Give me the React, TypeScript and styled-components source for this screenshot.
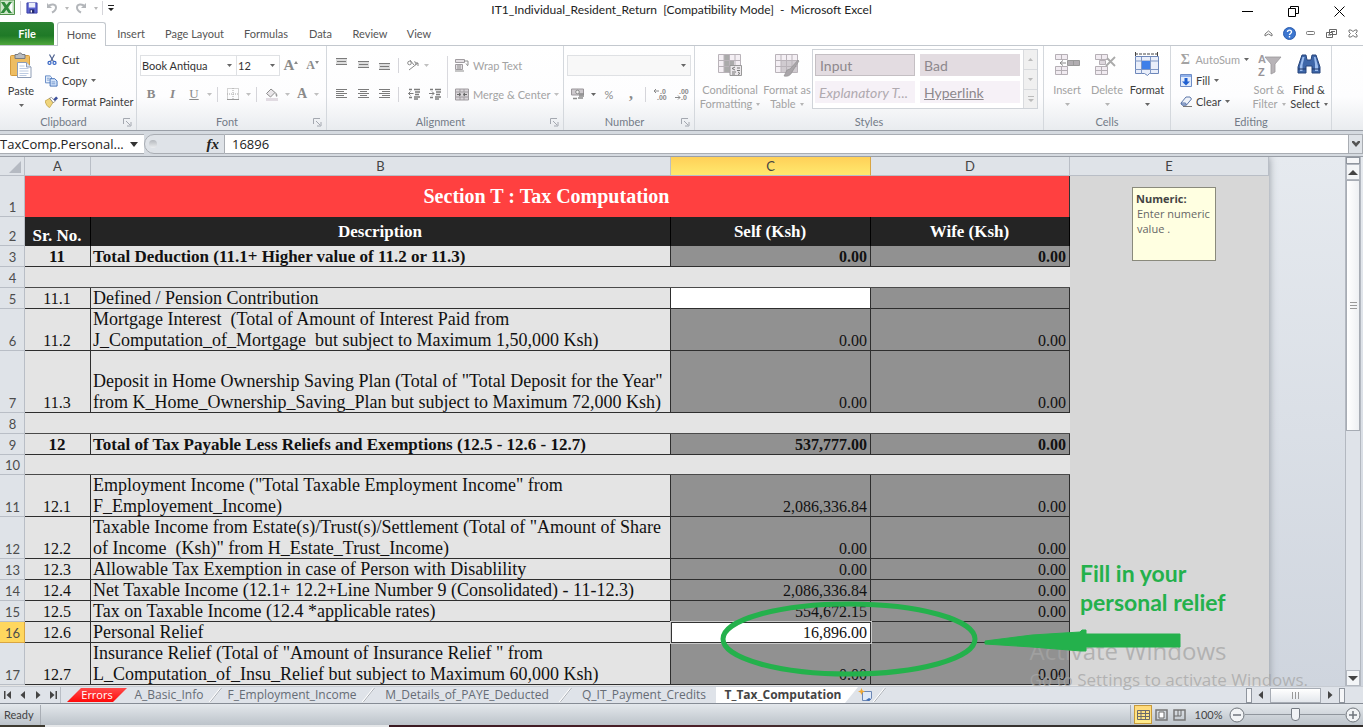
import React from "react";
import styled, { createGlobalStyle, css } from "styled-components";

const UI = `Lato, "Open Sans", sans-serif`;
const HUMANIST = `"Open Sans", "Noto Sans", sans-serif`;
const SHEET = `"Liberation Serif", serif`;
const CALIBRI = `Lato, "Noto Sans", sans-serif`;

const GlobalStyle = createGlobalStyle`
  *, *::before, *::after { box-sizing: border-box; }
  body { margin: 0; font-family: ${UI}; font-size: 11px; color: #444; overflow: hidden; }
  button, input, select { font: inherit; color: inherit; margin: 0; padding: 0; border: 0; background: none; border-radius: 0; }
  button { display: flex; align-items: center; justify-content: center; white-space: nowrap; flex: none; }
  svg { display: block; flex: none; }
`;

/* ---------- window ---------- */

const Window = styled.div`
  position: relative;
  display: flex;
  flex-direction: column;
  height: 100vh;
  background: #fff;
`;

const TitleBar = styled.header`
  position: relative;
  display: flex;
  align-items: center;
  justify-content: space-between;
  height: 22px;
`;

const QuickAccess = styled.div`
  display: flex;
  align-items: center;
  height: 16px;
  align-self: flex-start;
`;

const QuickButton = styled.button<{ $w: number }>`
  width: ${(p) => p.$w}px;
  height: 16px;
`;

const Title = styled.h1`
  margin: 0;
  position: absolute;
  left: 0;
  right: 0;
  top: 0;
  text-align: center;
  font-size: 12px;
  line-height: 20px;
  font-weight: 400;
  color: #222;
  white-space: pre;
  pointer-events: none;
`;

const WindowButtons = styled.div`
  display: flex;
  padding-right: 1px;
`;

const WindowButton = styled.button`
  width: 46px;
  height: 22px;
`;

const TabBar = styled.nav`
  display: flex;
  align-items: flex-end;
  height: 24px;
  border-bottom: 1px solid #c3c8ce;
`;

const RibbonTab = styled.button<{ $w: number; $kind?: "file" | "active" }>`
  width: ${(p) => p.$w}px;
  height: 23px;
  color: #555;
  ${(p) =>
    p.$kind === "file" &&
    css`
      && { color: #fff; background: linear-gradient(#2b8232, #1f7a27 60%, #4fa63c); border-radius: 0 3px 0 0; margin-right: 3px; }
      font-weight: 700;
    `}
  ${(p) =>
    p.$kind === "active" &&
    css`
      height: 24px;
      && { margin-bottom: -1px; border: 1px solid #c3c8ce; border-bottom: 0; border-radius: 3px 3px 0 0; background: #fff; }
    `}
`;

const TabBarRight = styled.div`
  display: flex;
  margin-left: auto;
  height: 23px;
  align-items: center;
`;

const DocButton = styled.button`
  width: 21px;
  height: 20px;
`;

/* ---------- ribbon ---------- */

const Ribbon = styled.div`
  display: flex;
  height: 84px;
  flex: none;
  background: linear-gradient(#fff, #fdfdfe 60%, #e9ecef);
`;

const GroupBox = styled.section<{ $w: number }>`
  display: flex;
  flex-direction: column;
  width: ${(p) => p.$w}px;
  flex: none;
  border-right: 1px solid #d4d8dd;
`;

const GroupBody = styled.div`
  display: flex;
  height: 68px;
  padding: 3px 3px 0;
`;

const GroupFooter = styled.div`
  display: flex;
  align-items: center;
  height: 16px;
  padding: 0 4px;
`;

const GroupLabel = styled.h2`
  flex: 1;
  margin: 0;
  text-align: center;
  font-size: 11px;
  line-height: 16px;
  font-weight: 400;
  color: #737b87;
`;

const BigButton = styled.button<{ $w: number; $dim?: boolean }>`
  flex-direction: column;
  justify-content: flex-start;
  width: ${(p) => p.$w}px;
  height: 65px;
  && { padding-top: 3px; }
  color: ${(p) => (p.$dim ? "#a3a3a3" : "#3c3c3c")};
  svg:first-child { margin-bottom: 5px; }
`;

const BigLine = styled.span`
  display: flex;
  align-items: center;
  gap: 4px;
  height: 14px;
  line-height: 14px;
`;

const Stack = styled.div`
  display: flex;
  flex: none;
  flex-direction: column;
`;

const ClipboardStack = styled(Stack)`
  padding-left: 6px;
`;

const EditStack = styled(Stack)`
  width: 75px;
  padding-left: 5px;
`;

const SmallButton = styled.button<{ $dim?: boolean }>`
  justify-content: flex-start;
  gap: 4px;
  height: 21px;
  color: ${(p) => (p.$dim ? "#a3a3a3" : "#3c3c3c")};
`;

const SmallIcon = styled.span`
  display: flex;
  justify-content: center;
  width: 13px;
`;

const ToolRow = styled.div`
  display: flex;
  align-items: center;
  height: 22px;
  margin: 5px 0 7px;
  & + & { margin: 0; }
`;

const Tool = styled.button<{ $w: number }>`
  width: ${(p) => p.$w}px;
  height: 22px;
  color: #8a8a8a;
`;

const Glyph = styled.span<{ $bold?: boolean; $italic?: boolean; $line?: boolean; $size?: number }>`
  font-family: ${SHEET};
  font-size: ${(p) => p.$size ?? 13}px;
  font-weight: ${(p) => (p.$bold ? 700 : 400)};
  font-style: ${(p) => (p.$italic ? "italic" : "normal")};
  text-decoration: ${(p) => (p.$line ? "underline" : "none")};
`;

const Rule = styled.span<{ $h: number }>`
  width: 1px;
  height: ${(p) => p.$h}px;
  margin: 0 4px;
  background: #d5d5da;
`;

const TallRule = styled.div`
  flex: none;
  width: 1px;
  height: 42px;
  margin: 7px 7px 0 2px;
  background: #d9d9de;
`;

const Picker = styled.label<{ $w: number; $dim?: boolean }>`
  display: flex;
  align-items: center;
  width: ${(p) => p.$w}px;
  height: 21px;
  padding: 0 4px 0 1px;
  border: 1px solid #dfe1e4;
  margin-right: -1px;
  background: ${(p) => (p.$dim ? "#f8f8f8" : "#fff")};
  color: #333;
  select { flex: 1; min-width: 0; appearance: none; outline: 0; }
`;

const Gallery = styled.div`
  display: flex;
  height: 60px;
  border: 1px solid #cfd3d8;
  background: #fff;
`;

const GalleryGrid = styled.div`
  display: grid;
  grid-template-columns: 100px 100px;
  grid-auto-rows: 22px;
  gap: 5px;
  padding: 4px 3px 0 2px;
`;

const StyleCell = styled.button<{ $tone: "dark" | "light"; $boxed?: boolean; $italic?: boolean; $line?: boolean }>`
  justify-content: flex-start;
  font-family: ${CALIBRI};
  font-size: 14px;
  color: ${(p) => (p.$italic ? "#b0aab0" : "#8d888d")};
  font-style: ${(p) => (p.$italic ? "italic" : "normal")};
  text-decoration: ${(p) => (p.$line ? "underline" : "none")};
  && {
    padding-left: 4px;
    background: ${(p) => (p.$tone === "dark" ? "#e3dce1" : "#f6f1f7")};
    border: ${(p) => (p.$boxed ? "1px solid #c4bfc3" : "0")};
  }
`;

const GalleryScroll = styled.div`
  display: grid;
  grid-template-rows: repeat(3, 1fr);
  width: 14px;
  background: #f0f0f0;
  border-left: 1px solid #d9dbde;
  button + button { border-top: 1px solid #d9dbde; }
`;

/* ---------- formula bar ---------- */

const FormulaBar = styled.div`
  display: flex;
  flex: none;
  height: 27px;
  padding: 3px 0 2px;
  border-top: 1px solid #9a9fa7;
  border-bottom: 1px solid #9a9fa7;
  background: #d5dae0;
  font-family: ${HUMANIST};
  font-size: 13px;
  line-height: 18px;
  color: #222;
`;

const NameBox = styled.div`
  display: flex;
  align-items: center;
  width: 144px;
  background: #fff;
  border: solid #a9adb3;
  border-width: 1px 0;
  input { width: 130px; height: 18px; outline: 0; }
`;

const FxArea = styled.div`
  display: flex;
  align-items: center;
  justify-content: space-between;
  width: 81px;
  padding: 0 5px 0 2px;
  border: 1px solid #a9adb3;
  border-radius: 10px 0 0 10px;
  background: #dfe3e8;
`;

const FxDot = styled.span`
  width: 8px;
  height: 8px;
  border-radius: 50%;
  margin-left: 2px;
  background: linear-gradient(#b4b8bd, #eceef0);
`;

const FormulaInput = styled.input`
  flex: 1;
  min-width: 0;
  outline: 0;
  && { padding-left: 7px; background: #fff; border: solid #a9adb3; border-width: 1px 0; }
`;

const ExpandButton = styled.button`
  width: 15px;
  && { background: #dfe3e8; border: 1px solid #a9adb3; }
`;

/* ---------- worksheet ---------- */

const Workspace = styled.main`
  position: relative;
  display: flex;
  flex: 1;
  min-height: 0;
  overflow: hidden;
  background: linear-gradient(#e6eaef, #cfd5de);
`;

const SheetArea = styled.div`
  flex: none;
  background: #e4e4e4;
  box-shadow: 0 0 8px #8e949c;
`;

const Grid = styled.table`
  width: 1269px;
  table-layout: fixed;
  border-collapse: separate;
  border-spacing: 0;
  td, th { padding: 0; overflow: hidden; }
`;

const ColumnHead = styled.th<{ $on?: boolean }>`
  height: 19px;
  font-family: ${CALIBRI};
  font-size: 13px;
  font-weight: 400;
  line-height: 18px;
  color: #444;
  background: ${(p) => (p.$on ? "linear-gradient(#ffd058, #ffe96e)" : "#dfe3e8")};
  border-right: 1px solid ${(p) => (p.$on ? "#d9a542" : "#b9bec6")};
  border-bottom: 1px solid #b9bec6;
`;

const RowHead = styled.th<{ $on?: boolean }>`
  vertical-align: bottom;
  font-family: ${CALIBRI};
  font-size: 13px;
  line-height: 16px;
  font-weight: 400;
  color: #4d4d4d;
  background: ${(p) => (p.$on ? "#ffd75e" : "#dfe3e8")};
  box-shadow: inset -1px -1px 0 ${(p) => (p.$on ? "#d9a542" : "#b9bec6")};
  && { padding-bottom: 2px; }
`;

const Row = styled.tr<{ $h: number }>`
  height: ${(p) => p.$h}px;
`;

type CellKind = "banner" | "head" | "label" | "locked" | "open" | "gap" | "side" | "active";

const tones: Record<CellKind, string> = {
  banner: "#ff4040",
  head: "#242424",
  label: "#e4e4e4",
  locked: "#919191",
  open: "#fff",
  active: "#fff",
  gap: "#e4e4e4",
  side: "#d7d7d7",
};

const cellSize = (kind: CellKind, align?: string, bold?: boolean) => {
  if (kind === "banner") return 20;
  if (kind === "head" || bold) return align === "right" ? 16 : 17;
  return align ? 16 : 18;
};

const Cell = styled.td<{ $kind: CellKind; $align?: "center" | "right"; $bold?: boolean; $mid?: boolean }>`
  font-family: ${SHEET};
  font-size: ${(p) => cellSize(p.$kind, p.$align, p.$bold)}px;
  line-height: 21px;
  font-weight: ${(p) => (p.$bold ? 700 : 400)};
  text-align: ${(p) => p.$align ?? "left"};
  vertical-align: ${(p) => (p.$mid ? "middle" : "bottom")};
  white-space: pre;
  color: ${(p) => (p.$kind === "banner" || p.$kind === "head" ? "#fff" : "#111")};
  background: ${(p) => tones[p.$kind]};
  && { padding: 0 4px 0 2px; }
  ${(p) => p.$kind === "banner" && css`box-shadow: inset -1px 0 0 #333;`}
  ${(p) => p.$kind === "head" && css`box-shadow: inset -1px 0 0 #000;`}
  ${(p) => ["label", "locked", "open"].includes(p.$kind) && css`box-shadow: inset -1px -1px 0 #2e2e2e;`}
  ${(p) => p.$kind === "gap" && css`box-shadow: inset 0 -1px 0 #4a4a4a;`}
  ${(p) => p.$kind === "active" && css`box-shadow: inset 0 0 0 1px #333, 0 0 0 1px #c9c9c9; position: relative;`}
`;

const Note = styled.aside`
  position: absolute;
  left: 1132px;
  top: 30px;
  width: 84px;
  height: 74px;
  padding: 3px;
  border: 1px solid #8a8a7c;
  background: #ffffe1;
  font-family: ${HUMANIST};
  font-size: 11px;
  line-height: 15px;
  color: #666;
  p { margin: 0; padding-left: 1px; }
  strong { color: #444; }
`;

const Marks = styled.svg`
  position: absolute;
  left: 716px;
  top: 440px;
  z-index: 2;
`;

const Callout = styled.p`
  position: absolute;
  left: 1080px;
  top: 402px;
  margin: 0;
  font-family: ${CALIBRI};
  font-size: 23px;
  line-height: 29px;
  font-weight: 700;
  color: #24b14c;
`;

const Watermark = styled.div`
  position: absolute;
  right: 55px;
  bottom: 34px;
  z-index: 1;
  pointer-events: none;
  font-family: ${HUMANIST};
  color: rgba(165, 165, 165, 0.75);
  p { margin: 0; font-size: 17px; line-height: 26px; white-space: nowrap; }
  p:first-child { font-size: 24px; line-height: 32px; }
`;

const VScroll = styled.div`
  display: flex;
  flex-direction: column;
  width: 16px;
  margin: 0 2px 0 auto;
  border: solid #b3b8c0;
  border-width: 0 1px;
  background: #dfe3e9;
`;

const Splitter = styled.div`
  height: 7px;
  border: 1px solid #8f959e;
  background: #f5f6f8;
`;

const ScrollButton = styled.button`
  height: 16px;
  width: 14px;
  && { border: 1px solid #b3b8c0; background: #f3f5f7; }
`;

const VThumb = styled.div`
  display: flex;
  align-items: center;
  justify-content: center;
  height: 251px;
  border: 1px solid #a7acb4;
  background: linear-gradient(90deg, #fff, #eef0f3);
`;

const Spacer = styled.div`
  flex: 1;
`;

/* ---------- sheet tabs and status bar ---------- */

const SheetBar = styled.div`
  display: flex;
  flex: none;
  height: 17px;
  border-top: 1px solid #c7ccd3;
  background: #dfe3e9;
  overflow: hidden;
`;

const SheetNav = styled.div`
  display: flex;
  width: 61px;
  border-right: 1px solid #b9bec6;
`;

const NavButton = styled.button`
  width: 15px;
  height: 16px;
`;

const SheetTab = styled.button<{ $w: number; $kind?: "error" | "active" }>`
  width: ${(p) => p.$w}px;
  height: 16px;
  font-family: ${HUMANIST};
  font-size: 12px;
  line-height: 16px;
  color: #666c75;
  ${(p) =>
    p.$kind === "error" &&
    css`
      height: 14px;
      font-size: 11px;
      && { margin: 1px 2px 0 6px; color: #fff; background: linear-gradient(#ff4a4a, #ff0a0a); }
      clip-path: polygon(14px 0, 100% 0, calc(100% - 14px) 100%, 0 100%);
    `}
  ${(p) =>
    p.$kind === "active" &&
    css`
      font-weight: 700;
      && { color: #444; background: #fff; padding-right: 8px; }
      clip-path: polygon(0 0, 100% 0, calc(100% - 13px) 100%, 0 100%);
    `}
`;

const HScroll = styled.div`
  display: flex;
  align-items: center;
  justify-content: space-between;
  width: 99px;
  margin: 0 18px 0 auto;
`;

const HGrip = styled.div`
  width: 6px;
  height: 15px;
  border: 1px solid #8f959e;
  background: #f5f6f8;
`;

const HThumb = styled.div`
  display: flex;
  align-items: center;
  justify-content: center;
  width: 51px;
  height: 15px;
  border: 1px solid #a7acb4;
  background: linear-gradient(#fff, #e3e7ec);
`;

const StatusBar = styled.footer`
  display: flex;
  align-items: center;
  flex: none;
  height: 22px;
  border-top: 1px solid #868c95;
  background: linear-gradient(#e4e8ec, #bcc3ca);
`;

const Ready = styled.span`
  width: 41px;
  padding-left: 4px;
  line-height: 20px;
  border-right: 1px solid #a9aeb5;
`;

const StatusRight = styled.div`
  display: flex;
  align-items: center;
  margin-left: auto;
  padding: 0 2px 0 3px;
  border-left: 1px solid #a9aeb5;
`;

const ViewButton = styled.button<{ $on?: boolean }>`
  width: 18px;
  height: 19px;
  ${(p) => p.$on && css`&& { border: 1px solid #c79a3a; background: linear-gradient(#ffd97a, #ffec8b); }`}
`;

const ZoomLabel = styled.output`
  width: 41px;
  text-align: center;
`;

const ZoomRange = styled.input`
  width: 100px;
  height: 16px;
  appearance: none;
  && { background: linear-gradient(#8f959c, #8f959c) center / 100% 1px no-repeat; }
  &::-webkit-slider-thumb {
    appearance: none;
    width: 9px;
    height: 13px;
    border: 1px solid #757b83;
    border-radius: 1px 1px 4px 4px;
    background: #f1f3f5;
  }
`;

const DesktopEdge = styled.div`
  flex: none;
  height: 2px;
  background: linear-gradient(90deg, #3d3a30 45px, #e4e6e8 45px, #e4e6e8 389px, #3a1a22 389px, #4d2029 700px, #3a3632 860px, #302c2a);
`;

/* ---------- small drawings ---------- */

const Caret = ({ color = "#666", w = 5 }: { color?: string; w?: number }) => (
  <svg width={w} height={w > 6 ? 5 : 3} viewBox="0 0 6 3" preserveAspectRatio="none"><path d="M0 0h6L3 3z" fill={color} /></svg>
);

const Launcher = () => (
  <svg width="9" height="9" viewBox="0 0 9 9" fill="none" stroke="#a4a8b0">
    <path d="M.5 6V.5H7M3 3l4 4M4 8h4V4" />
  </svg>
);

const ExcelLogo = () => (
  <svg width="16" height="16" viewBox="0 0 16 16">
    <path d="M0 0h14.500v14.500H0z" fill="#cfe6ca" stroke="#4c9147" />
    <path d="M9 2h4v11H9z" fill="#fff" stroke="#86b880" strokeWidth=".6" />
    <path d="M1 2h3.500L6.500 5 9 2h3L8 7.500l4 5.500H8.500L6.300 9.800 4 13H.5l4-5.500z" fill="#2f8a3a" />
  </svg>
);

const SaveIcon = () => (
  <svg width="12" height="12" viewBox="0 0 13 13">
    <path d="M1 1h11v11H1z" fill="#5b62cf" stroke="#3a3fa5" />
    <path d="M3 1h7v5H3z" fill="#eceffb" />
    <path d="M4 8h5v4H4z" fill="#23286f" />
    <path d="M5 9h1.500v2.500H5z" fill="#fff" />
  </svg>
);

const UndoIcon = ({ flip }: { flip?: boolean }) => (
  <svg width="12" height="12" viewBox="0 0 12 12" fill="none" stroke="#b3b6ba" strokeWidth="2">
    <g transform={flip ? "matrix(-1 0 0 1 12 0)" : undefined}>
      <path d="M2 4.500C5 1.500 10 2 10 5.500 10 8 8 9.500 6 10.500" />
      <path d="M1 1v5h5z" fill="#b3b6ba" stroke="none" />
    </g>
  </svg>
);

const PasteIcon = () => (
  <svg width="26" height="27" viewBox="0 0 26 27">
    <rect x="2.500" y="3.500" width="19" height="20" rx="1" fill="#eebd62" stroke="#d49a3c" />
    <path d="M7 2.500h3C10 .5 14 .5 14 2.500h3v4H7z" fill="#b9bcc0" stroke="#777b80" />
    <path d="M9.500 10.500h9l4.500 4.500v10.500H9.500z" fill="#fff" stroke="#8d9cb5" />
    <path d="M18.500 10.500V15H23" fill="#dfe7f3" stroke="#8d9cb5" />
    <path d="M11.500 14h5M11.500 16.500h9M11.500 19h9M11.500 21.500h9M11.500 23.500h7" stroke="#bccbe2" />
  </svg>
);

const CutIcon = () => (
  <svg width="10" height="12" viewBox="0 0 12 13" fill="none">
    <path d="M3 0l4.500 8M9 0L4.500 8" stroke="#4b5f8e" strokeWidth="1.400" />
    <circle cx="3" cy="10" r="1.800" stroke="#3464c4" strokeWidth="1.500" />
    <circle cx="9" cy="10" r="1.800" stroke="#3464c4" strokeWidth="1.500" />
  </svg>
);

const CopyIcon = () => (
  <svg width="13" height="12" viewBox="0 0 14 12">
    <path d="M.5.5h5L7 2v6H.5z" fill="#eaf2fd" stroke="#5c84c2" />
    <path d="M5.500 3.500h5L13 6v5.500H5.500z" fill="#d4e4fa" stroke="#3e6db5" />
    <path d="M2 3h3M2 5h3M7 7h4M7 9h4" stroke="#5c84c2" strokeWidth=".8" />
  </svg>
);

const BrushIcon = () => (
  <svg width="13" height="12" viewBox="0 0 14 12">
    <path d="M0 5l5-3 4 4-4 6C2 11 1 8 0 5z" fill="#f0d57c" stroke="#b79432" strokeWidth=".7" />
    <path d="M5 2l2-1 4 4-2 2z" fill="#fff" stroke="#666" strokeWidth=".7" />
    <path d="M9 3l3-3 2 2-3 3z" fill="#3b4f9c" />
  </svg>
);

const Lines = ({ ws, align = "c", dy = 0 }: { ws: number[]; align?: "l" | "c" | "r"; dy?: number }) => (
  <svg width="13" height="14" viewBox="0 0 13 14">
    {ws.map((w, i) => (
      <rect key={i} x={align === "l" ? 1 : align === "r" ? 12 - w : (13 - w) / 2} y={2 + dy + i * (ws.length > 3 ? 2 : 3)} width={w} height="1" fill="#7b7b7b" />
    ))}
    {ws.length === 3 && <rect x="1" y={3 + dy} width="11" height="5" fill="#7b7b7b" opacity=".25" />}
  </svg>
);

const IndentIcon = ({ out }: { out?: boolean }) => (
  <svg width="14" height="12" viewBox="0 0 14 12" stroke="#7d7d7d">
    <path d="M2 1.500h3M7 1.500h6M8 4h5M8 6.500h4M7 9h6M2 9.500h3M7 11h4" strokeWidth="1.300" />
    {out ? <path d="M6.500 5.500h-5M3.500 3.500l-2 2 2 2" fill="none" /> : <path d="M1 5.500h5M4 3.500l2 2-2 2" fill="none" />}
  </svg>
);

const OrientIcon = () => (
  <svg width="14" height="12" viewBox="0 0 14 12" fill="none" stroke="#8a8a8a">
    <circle cx="3.500" cy="4" r="1.800" /><path d="M4 1l4 5M8 3c2-1 3 2 1 3M3 11l9-7M12 4h-3M12 4v3" />
  </svg>
);

const WrapIcon = () => (
  <svg width="14" height="14" viewBox="0 0 14 14">
    <path d="M.5 1.500h9v3h-9zM.5 6.500h7v5h-7z" fill="#e4e0e4" stroke="#a09ca0" />
    <path d="M2 8h4M2 10h4M9 3h4v4M11 5.500L13 8M0 13h9" fill="none" stroke="#8d8d8d" />
  </svg>
);

const MergeIcon = () => (
  <svg width="14" height="13" viewBox="0 0 14 13">
    <path d="M.5 1h13v11H.5z" fill="#d9d5d9" stroke="#a09ca0" />
    <path d="M1 4h12M1 9h12M5 1v3M9 1v3M5 9v3M9 9v3" stroke="#a09ca0" />
    <path d="M2 6.500h3M12 6.500H9M4 5l2 1.500L4 8M10 5L8 6.500 10 8" stroke="#666" fill="none" />
  </svg>
);

const BordersIcon = () => (
  <svg width="12" height="12" viewBox="0 0 12 12" stroke="#a8a8a8" fill="none">
    <path d="M.5.5h11v11H.5zM6 0v12M0 6h12" strokeDasharray="1 1" /><path d="M0 11.500h12" stroke="#999" />
  </svg>
);

const BucketIcon = () => (
  <svg width="14" height="13" viewBox="0 0 14 13">
    <path d="M6 1L1.500 5.500l4 3.500L10 4.500z" fill="#e9e6e9" stroke="#8d8d8d" />
    <path d="M10 4c2 1 3 3 2 5-2-1-1-3-2-5z" fill="#999" /><path d="M1 10h12v3H1z" fill="#e1dbe2" />
  </svg>
);

const MoneyIcon = () => (
  <svg width="14" height="13" viewBox="0 0 14 13">
    <path d="M.5 1h12v6H.5z" fill="#cdc9cd" stroke="#9a969a" /><circle cx="6.500" cy="4" r="1.800" fill="#f2f2f2" stroke="#8a8a8a" />
    <path d="M8 6h5M8 8h5M7 10h5M2 10.500h4" stroke="#8a8a8a" strokeWidth="1.500" />
  </svg>
);

const Decimals = ({ top, bottom, left }: { top: string; bottom: string; left?: boolean }) => (
  <svg width="15" height="13" viewBox="0 0 15 13" fontFamily="Liberation Sans, sans-serif" fontSize="7" fontWeight="700" fill="#8a8a8a">
    <text x={left ? 7 : 5} y="6">{top}</text><text x={left ? 4 : 7} y="12">{bottom}</text>
    <path d={left ? "M1 3h5M3 1L1 3l2 2" : "M1 9.500h5M4 7.500l2 2-2 2"} stroke="#8a8a8a" fill="none" />
  </svg>
);

const TableIcon = ({ brush }: { brush?: boolean }) => (
  <svg width="26" height="26" viewBox="0 0 26 26">
    <path d="M1.500 2.500h22v18h-22z" fill="#f4eff4" stroke="#b9b3b9" />
    {brush ? <path d="M7 8h16v12H7z" fill="#d0cbd0" /> : <path d="M7 3h5v17H7zM12 8h5v5h-5z" fill="#aaa" />}
    <path d="M1 8.500h23M1 14.500h23M7 2v19M12.500 2v19M18 2v19" stroke="#b9b3b9" fill="none" />
    {brush ? (
      <path d="M24 8l-8 9-3 1-3 6c4 1 7-1 8-4l7-11z" fill="#a9a5a9" stroke="#8d8d8d" strokeWidth=".6" />
    ) : (
      <><path d="M13 13.500h11.500v10H13z" fill="#ebe8eb" stroke="#999" /><path d="M18 15l-3 1.500 3 1.500M15 20h4M20 16h3M20 18.500h3M15 22h3M21 20l2 1.500-2 1" stroke="#777" fill="none" /></>
    )}
  </svg>
);

const CellsIcon = ({ kind }: { kind: "insert" | "delete" }) => (
  <svg width="26" height="26" viewBox="0 0 26 26">
    <path d="M1.500 2.500h12v5h-12zM7.500 2.500v5M1.500 14.500h12v8h-12zM1.500 18.500h12M7.500 14.500v8" fill="#f1ebf1" stroke="#b5afb5" />
    {kind === "insert" ? (
      <><path d="M13.500 8.500h12v5h-12z" fill="#b1adb1" stroke="#999" /><path d="M19.500 8.500v5" stroke="#999" /><path d="M12 11H6M9 8.500L6 11l3 2.500" stroke="#888" fill="none" /></>
    ) : (
      <><path d="M5.500 8.500h6v4h-6z" fill="#ddd7dd" stroke="#b5afb5" /><path d="M13 6l8 8M21 5l-9 9" stroke="#aaa" strokeWidth="1.800" /></>
    )}
  </svg>
);

const FormatIcon = () => (
  <svg width="26" height="26" viewBox="0 0 26 26">
    <path d="M1 2h23" stroke="#444" strokeDasharray="3 1" /><path d="M1.500 0v4M23.500 0v4" stroke="#444" />
    <path d="M1.500 4.500h23v17h-9l-2 2-3-2h-9z" fill="#e9eefa" stroke="#6d87ba" />
    <path d="M1 9h23M1 17.500h23M7.500 5v17M16.500 5v17" stroke="#7f97c5" />
    <path d="M8 9h8v8H8z" fill="#3f7fe8" />
  </svg>
);

const FillIcon = () => (
  <svg width="12" height="13" viewBox="0 0 12 13">
    <path d="M.5.5h11v12H.5z" fill="#e3ecfb" stroke="#6d8cc6" /><path d="M1 1h10v2H1z" fill="#8fb0ea" />
    <path d="M4.500 4h3v3.500H10L6 11.500 2 7.500h2.500z" fill="#1f5fd0" />
  </svg>
);

const EraserIcon = () => (
  <svg width="12" height="11" viewBox="0 0 12 11">
    <path d="M1 7l5-6h4l1.500 2-5 6H2z" fill="#eef2f9" stroke="#5d76a8" /><path d="M1 7h4.500l1 2H2z" fill="#b8c9ea" stroke="#5d76a8" /><path d="M3 10.500h9" stroke="#777" />
  </svg>
);

const SortIcon = () => (
  <svg width="26" height="26" viewBox="0 0 26 26">
    <path d="M9 5h16l-6 7v8l-4 2V12z" fill="#b8b4b8" stroke="#9b979b" strokeWidth=".8" />
    <text x="2" y="11" fontFamily="Liberation Sans, sans-serif" fontWeight="700" fontSize="11" fill="#a09ca0">A</text>
    <text x="2" y="24" fontFamily="Liberation Sans, sans-serif" fontWeight="700" fontSize="11" fill="#969296">Z</text>
  </svg>
);

const BinocularsIcon = () => (
  <svg width="26" height="26" viewBox="0 0 26 26">
    <path d="M6 3h4l1 5h4l1-5h4l4 12v6h-8v-7h-6v7H2v-6z" fill="#3e66a8" stroke="#27457c" strokeLinejoin="round" />
    <path d="M6.500 5h2L6.500 13v6H4v-5zM18 5h1.500L22 14v5h-3v-7z" fill="#9dbdee" />
    <path d="M2 17h8M16 17h8" stroke="#1f3766" />
  </svg>
);

const NewSheetIcon = () => (
  <svg width="15" height="14" viewBox="0 0 15 14">
    <path d="M4.500 3.500h9v7l-2 2h-7z" fill="#dfe9f8" stroke="#6c87b4" /><path d="M8 12l3-2 2 1-2 2z" fill="#3e6db5" />
    <path d="M3.500 0l1 2.500L7 3.500 4.500 4.500l-1 2.500-1-2.500L0 3.500l2.500-1z" fill="#f0a935" />
  </svg>
);

const Slash = () => (
  <svg width="13" height="16" viewBox="0 0 13 16" fill="none"><path d="M.5 15.500L12 1" stroke="#fff" strokeWidth="2" /><path d="M1 15.500L12.500 1" stroke="#a7acb4" /></svg>
);

const ViewIcon = ({ kind }: { kind: number }) => (
  <svg width="13" height="12" viewBox="0 0 13 12" fill="none" stroke="#6b6b6b">
    {kind === 0 && <path d="M.5 1.500h12v9H.5zM0 4.500h13M0 7.500h13M4 1v10M8.500 1v10" />}
    {kind === 1 && <><path d="M1 1h11v10H1z" stroke="#777" strokeWidth="1.500" /><path d="M4 3h5v6H4z" fill="#fff" /></>}
    {kind === 2 && <><path d="M1 1h11v10H1z" stroke="#777" strokeWidth="1.500" /><path d="M5 1v6M8 1v6M1 7h7" /></>}
  </svg>
);

const ZoomDisc = ({ plus }: { plus?: boolean }) => (
  <svg width="16" height="16" viewBox="0 0 16 16" fill="none" stroke="#6f757c">
    <circle cx="8" cy="8" r="7" fill="#f1f3f5" /><path d={plus ? "M4 8h8M8 4v8" : "M4 8h8"} strokeWidth="1.500" />
  </svg>
);

const Arrow = ({ d }: { d: string }) => (
  <svg width="10" height="10" viewBox="0 0 10 10"><path d={d} fill="#444" /></svg>
);

const SelectAll = () => (
  <svg width="24" height="18" viewBox="0 0 24 18"><path d="M21 4v12H9z" fill="#b5bac2" /></svg>
);

/* ---------- ribbon pieces ---------- */

const Group = ({ label, w, launcher, children }: { label: string; w: number; launcher?: boolean; children: React.ReactNode }) => (
  <GroupBox $w={w} aria-label={label}>
    <GroupBody>{children}</GroupBody>
    <GroupFooter>
      <GroupLabel>{label}</GroupLabel>
      {launcher && <Launcher />}
    </GroupFooter>
  </GroupBox>
);

const Big = ({ w, icon, lines, dim }: { w: number; icon: React.ReactNode; lines: [string, string?]; dim?: boolean }) => (
  <BigButton $w={w} $dim={dim}>
    {icon}
    <BigLine>{lines[0]}</BigLine>
    <BigLine>
      {lines[1] && <span>{lines[1]}</span>}
      <BigCaret><Caret color={dim ? "#b5b5b5" : "#666"} w={lines[1] ? 4 : 5} /></BigCaret>
    </BigLine>
  </BigButton>
);

const BigCaret = styled.span`
  display: flex;
  && svg { margin: 0; }
`;

const Small = ({ icon, dim, children }: { icon: React.ReactNode; dim?: boolean; children: React.ReactNode }) => (
  <SmallButton $dim={dim}><SmallIcon>{icon}</SmallIcon>{children}</SmallButton>
);

const ribbonTabs: { name: string; w: number; kind?: "file" | "active" }[] = [
  { name: "File", w: 54, kind: "file" },
  { name: "Home", w: 49, kind: "active" },
  { name: "Insert", w: 50 },
  { name: "Page Layout", w: 77 },
  { name: "Formulas", w: 66 },
  { name: "Data", w: 43 },
  { name: "Review", w: 56 },
  { name: "View", w: 42 },
];

/* ---------- worksheet data ---------- */

interface SheetRow {
  n: number;
  h: number;
  sr?: string;
  text?: string;
  self?: string;
  wife?: string;
  bold?: boolean;
  selfKind?: CellKind;
}

const rows: SheetRow[] = [
  { n: 3, h: 21, sr: "11", text: "Total Deduction (11.1+ Higher value of 11.2 or 11.3)", self: "0.00", wife: "0.00", bold: true },
  { n: 4, h: 21 },
  { n: 5, h: 20, sr: "11.1", text: "Defined / Pension Contribution", self: "", wife: "", selfKind: "open" },
  { n: 6, h: 42, sr: "11.2", text: "Mortgage Interest  (Total of Amount of Interest Paid from\nJ_Computation_of_Mortgage  but subject to Maximum 1,50,000 Ksh)", self: "0.00", wife: "0.00" },
  { n: 7, h: 62, sr: "11.3", text: "Deposit in Home Ownership Saving Plan (Total of \"Total Deposit for the Year\"\nfrom K_Home_Ownership_Saving_Plan but subject to Maximum 72,000 Ksh)", self: "0.00", wife: "0.00" },
  { n: 8, h: 21 },
  { n: 9, h: 21, sr: "12", text: "Total of Tax Payable Less Reliefs and Exemptions (12.5 - 12.6 - 12.7)", self: "537,777.00", wife: "0.00", bold: true },
  { n: 10, h: 20 },
  { n: 11, h: 42, sr: "12.1", text: "Employment Income (\"Total Taxable Employment Income\" from\nF_Employement_Income)", self: "2,086,336.84", wife: "0.00" },
  { n: 12, h: 42, sr: "12.2", text: "Taxable Income from Estate(s)/Trust(s)/Settlement (Total of \"Amount of Share\nof Income  (Ksh)\" from H_Estate_Trust_Income)", self: "0.00", wife: "0.00" },
  { n: 13, h: 20, sr: "12.3", text: "Allowable Tax Exemption in case of Person with Disablility", self: "0.00", wife: "0.00" },
  { n: 14, h: 21, sr: "12.4", text: "Net Taxable Income (12.1+ 12.2+Line Number 9 (Consolidated) - 11-12.3)", self: "2,086,336.84", wife: "0.00" },
  { n: 15, h: 21, sr: "12.5", text: "Tax on Taxable Income (12.4 *applicable rates)", self: "554,672.15", wife: "0.00" },
  { n: 16, h: 21, sr: "12.6", text: "Personal Relief", self: "16,896.00", wife: "", selfKind: "active" },
  { n: 17, h: 42, sr: "12.7", text: "Insurance Relief (Total of \"Amount of Insurance Relief \" from\nL_Computation_of_Insu_Relief but subject to Maximum 60,000 Ksh)", self: "0.00", wife: "0.00" },
];

const sheetTabs = [
  { name: "A_Basic_Info", w: 80 },
  { name: "F_Employment_Income", w: 140 },
  { name: "M_Details_of_PAYE_Deducted", w: 184 },
  { name: "Q_IT_Payment_Credits", w: 144 },
];

export default function App() {
  return (
    <Window>
      <GlobalStyle />
      <TitleBar>
        <QuickAccess>
          <ExcelLogo />
          <Rule $h={14} />
          <QuickButton $w={14} aria-label="Save"><SaveIcon /></QuickButton>
          <QuickButton $w={25} aria-label="Undo"><UndoIcon /></QuickButton>
          <QuickButton $w={5} aria-label="Undo list"><Caret color="#b8b8b8" w={4} /></QuickButton>
          <QuickButton $w={24} aria-label="Redo"><UndoIcon flip /></QuickButton>
          <QuickButton $w={5} aria-label="Redo list"><Caret color="#b8b8b8" w={4} /></QuickButton>
          <Rule $h={14} />
          <QuickButton $w={8} aria-label="Customize toolbar">
            <svg width="6" height="6" viewBox="0 0 6 6"><path d="M0 0h6v1H0zM0 3h6L3 6z" fill="#222" /></svg>
          </QuickButton>
        </QuickAccess>
        <Title>{"IT1_Individual_Resident_Return  [Compatibility Mode]  -  Microsoft Excel"}</Title>
        <WindowButtons>
          <WindowButton aria-label="Minimize"><svg width="11" height="11" viewBox="0 0 11 11"><path d="M0 5.500h11" stroke="#000" /></svg></WindowButton>
          <WindowButton aria-label="Restore"><svg width="11" height="11" viewBox="0 0 11 11" fill="none" stroke="#000"><path d="M.5 2.500h7v8h-7zM2.500 2.500v-2h8v7h-3" /></svg></WindowButton>
          <WindowButton aria-label="Close"><svg width="11" height="11" viewBox="0 0 11 11" stroke="#000"><path d="M.5.5l10 10M10.500.5l-10 10" /></svg></WindowButton>
        </WindowButtons>
      </TitleBar>

      <TabBar>
        {ribbonTabs.map((t) => (
          <RibbonTab key={t.name} $w={t.w} $kind={t.kind}>{t.name}</RibbonTab>
        ))}
        <TabBarRight>
          <DocButton aria-label="Collapse ribbon"><svg width="9" height="7" viewBox="0 0 9 7" fill="none" stroke="#777"><path d="M1 4l3.500-3L8 4v2L4.500 4 1 6z" /></svg></DocButton>
          <DocButton aria-label="Help">
            <svg width="13" height="13" viewBox="0 0 13 13"><circle cx="6.500" cy="6.500" r="6" fill="#3c76cf" stroke="#2a5cae" /><path d="M4.500 5c0-2.500 4-2.500 4 0 0 1.500-2 1.500-2 3M6.500 9v1.500" stroke="#fff" strokeWidth="1.400" fill="none" /></svg>
          </DocButton>
          <DocButton aria-label="Minimize workbook"><svg width="9" height="5" viewBox="0 0 9 5" fill="none" stroke="#777"><rect x=".5" y=".5" width="8" height="3" rx="1" /></svg></DocButton>
          <DocButton aria-label="Restore workbook"><svg width="11" height="9" viewBox="0 0 11 9" fill="none" stroke="#666"><path d="M3.500.5h7v5h-7zM.5 3.500h6v5h-6zM2 6h3M5 2.500h4" /></svg></DocButton>
          <DocButton aria-label="Close workbook"><svg width="10" height="9" viewBox="0 0 10 9" fill="none" stroke="#777"><path d="M1 1h2l2 1.500L7 1h2v2L7.500 4.500 9 6v2H7L5 6.500 3 8H1V6l1.500-1.500L1 3z" /></svg></DocButton>
        </TabBarRight>
      </TabBar>

      <Ribbon>
        <Group label="Clipboard" w={137} launcher>
          <Big w={36} icon={<PasteIcon />} lines={["Paste"]} />
          <ClipboardStack>
            <Small icon={<CutIcon />}>Cut</Small>
            <Small icon={<CopyIcon />}>Copy <Caret /></Small>
            <Small icon={<BrushIcon />}>Format Painter</Small>
          </ClipboardStack>
        </Group>

        <Group label="Font" w={190} launcher>
          <Stack>
            <ToolRow>
              <Picker $w={97}><select aria-label="Font name"><option>Book Antiqua</option></select><Caret /></Picker>
              <Picker $w={44}><select aria-label="Font size"><option>12</option></select><Caret /></Picker>
              <Tool $w={24} aria-label="Grow font"><Glyph $bold $size={15}>A</Glyph><svg width="4" height="9" viewBox="0 0 4 9"><path d="M0 3l2-3 2 3z" fill="#888" /></svg></Tool>
              <Tool $w={19} aria-label="Shrink font"><Glyph $bold $size={12}>A</Glyph><svg width="4" height="9" viewBox="0 0 4 9"><path d="M0 0h4L2 3z" fill="#888" /></svg></Tool>
            </ToolRow>
            <ToolRow>
              <Tool $w={22}><Glyph $bold>B</Glyph></Tool>
              <Tool $w={21}><Glyph $bold $italic>I</Glyph></Tool>
              <Tool $w={22}><Glyph $line>U</Glyph></Tool>
              <Tool $w={8} aria-label="Underline style"><Caret color="#c0c0c0" /></Tool>
              <Rule $h={15} />
              <Tool $w={22} aria-label="Borders"><BordersIcon /></Tool>
              <Tool $w={8} aria-label="Border style"><Caret color="#c0c0c0" /></Tool>
              <Rule $h={15} />
              <Tool $w={22} aria-label="Fill color"><BucketIcon /></Tool>
              <Tool $w={8} aria-label="Fill colors"><Caret color="#c0c0c0" /></Tool>
              <Tool $w={22}><Glyph $bold $size={14}>A</Glyph></Tool>
              <Tool $w={6} aria-label="Font colors"><Caret color="#c0c0c0" /></Tool>
            </ToolRow>
          </Stack>
        </Group>

        <Group label="Alignment" w={237} launcher>
          <Stack>
            <ToolRow>
              <Tool $w={22} aria-label="Top align"><Lines ws={[11, 9, 11]} dy={-2} /></Tool>
              <Tool $w={22} aria-label="Middle align"><Lines ws={[11, 9, 11]} dy={1} /></Tool>
              <Tool $w={20} aria-label="Bottom align"><Lines ws={[11, 9, 11]} dy={3} /></Tool>
              <Rule $h={15} />
              <Tool $w={20} aria-label="Orientation"><OrientIcon /></Tool>
              <Tool $w={7} aria-label="Orientations"><Caret color="#c0c0c0" /></Tool>
            </ToolRow>
            <ToolRow>
              <Tool $w={22} aria-label="Align left"><Lines ws={[11, 8, 11, 8, 11]} align="l" /></Tool>
              <Tool $w={22} aria-label="Center"><Lines ws={[11, 7, 11, 7, 11]} /></Tool>
              <Tool $w={20} aria-label="Align right"><Lines ws={[11, 8, 11, 8, 11]} align="r" /></Tool>
              <Rule $h={15} />
              <Tool $w={21} aria-label="Decrease indent"><IndentIcon out /></Tool>
              <Tool $w={21} aria-label="Increase indent"><IndentIcon /></Tool>
            </ToolRow>
          </Stack>
          <TallRule />
          <Stack>
            <ToolRow><SmallButton $dim><WrapIcon />Wrap Text</SmallButton></ToolRow>
            <ToolRow><SmallButton $dim><MergeIcon />Merge &amp; Center <Caret color="#c0c0c0" /></SmallButton></ToolRow>
          </Stack>
        </Group>

        <Group label="Number" w={131} launcher>
          <Stack>
            <ToolRow>
              <Picker $w={124} $dim><select aria-label="Number format"><option></option></select><Caret /></Picker>
            </ToolRow>
            <ToolRow>
              <Tool $w={22} aria-label="Accounting format"><MoneyIcon /></Tool>
              <Tool $w={8} aria-label="Accounting formats"><Caret /></Tool>
              <Tool $w={24}>%</Tool>
              <Tool $w={20}><Glyph $bold $size={16}>,</Glyph></Tool>
              <Rule $h={15} />
              <Tool $w={21} aria-label="Increase decimal"><Decimals top=".0" bottom=".00" left /></Tool>
              <Tool $w={21} aria-label="Decrease decimal"><Decimals top=".00" bottom=".0" /></Tool>
            </ToolRow>
          </Stack>
        </Group>

        <Group label="Styles" w={349}>
          <Big w={64} dim icon={<TableIcon />} lines={["Conditional", "Formatting"]} />
          <Big w={50} dim icon={<TableIcon brush />} lines={["Format as", "Table"]} />
          <Gallery>
            <GalleryGrid>
              <StyleCell $tone="dark" $boxed>Input</StyleCell>
              <StyleCell $tone="dark">Bad</StyleCell>
              <StyleCell $tone="light" $italic>Explanatory T...</StyleCell>
              <StyleCell $tone="light" $line>Hyperlink</StyleCell>
            </GalleryGrid>
            <GalleryScroll>
              <button aria-label="Previous styles"><svg width="5" height="3" viewBox="0 0 5 3"><path d="M0 3h5L2.500 0z" fill="#bbb" /></svg></button>
              <button aria-label="Next styles"><Caret color="#bbb" /></button>
              <button aria-label="More styles"><svg width="6" height="6" viewBox="0 0 6 6"><path d="M0 0h6v1H0zM0 3h6L3 6z" fill="#bbb" /></svg></button>
            </GalleryScroll>
          </Gallery>
        </Group>

        <Group label="Cells" w={127}>
          <Big w={40} dim icon={<CellsIcon kind="insert" />} lines={["Insert"]} />
          <Big w={40} dim icon={<CellsIcon kind="delete" />} lines={["Delete"]} />
          <Big w={40} icon={<FormatIcon />} lines={["Format"]} />
        </Group>

        <Group label="Editing" w={161}>
          <EditStack>
            <Small dim icon={<Glyph $bold $size={14}>Σ</Glyph>}>AutoSum <Caret /></Small>
            <Small icon={<FillIcon />}>Fill <Caret /></Small>
            <Small icon={<EraserIcon />}>Clear <Caret /></Small>
          </EditStack>
          <Big w={40} dim icon={<SortIcon />} lines={["Sort &", "Filter"]} />
          <Big w={40} icon={<BinocularsIcon />} lines={["Find &", "Select"]} />
        </Group>
      </Ribbon>

      <FormulaBar>
        <NameBox>
          <input aria-label="Name box" defaultValue="TaxComp.Personal..." />
          <Caret color="#333" w={8} />
        </NameBox>
        <FxArea>
          <FxDot />
          <Glyph $bold $italic $size={15}>fx</Glyph>
        </FxArea>
        <FormulaInput aria-label="Formula" defaultValue="16896" />
        <ExpandButton aria-label="Expand formula bar"><svg width="8" height="6" viewBox="0 0 8 6"><path d="M0 0h2l2 2 2-2h2v1.500L4 6 0 1.500z" fill="#555" /></svg></ExpandButton>
      </FormulaBar>

      <Workspace>
        <SheetArea>
          <Grid>
            <colgroup>
              <col width={25} /><col width={66} /><col width={580} /><col width={200} /><col width={199} /><col width={199} />
            </colgroup>
            <thead>
              <tr>
                <ColumnHead aria-label="Select all"><SelectAll /></ColumnHead>
                {["A", "B", "C", "D", "E"].map((c) => <ColumnHead key={c} $on={c === "C"} scope="col">{c}</ColumnHead>)}
              </tr>
            </thead>
            <tbody>
              <Row $h={41}>
                <RowHead scope="row">1</RowHead>
                <Cell $kind="banner" colSpan={4} $align="center" $bold $mid>Section T : Tax Computation</Cell>
                <Cell $kind="side" rowSpan={17} />
              </Row>
              <Row $h={29}>
                <RowHead scope="row">2</RowHead>
                <Cell $kind="head" $align="center" $bold>Sr. No.</Cell>
                <Cell $kind="head" $align="center" $bold $mid>Description</Cell>
                <Cell $kind="head" $align="center" $bold $mid>Self (Ksh)</Cell>
                <Cell $kind="head" $align="center" $bold $mid>Wife (Ksh)</Cell>
              </Row>
              {rows.map((r) => (
                <Row key={r.n} $h={r.h}>
                  <RowHead scope="row" $on={r.n === 16}>{r.n}</RowHead>
                  {r.sr ? (
                    <>
                      <Cell $kind="label" $align="center" $bold={r.bold}>{r.sr}</Cell>
                      <Cell $kind="label" $bold={r.bold}>{r.text}</Cell>
                      <Cell $kind={r.selfKind ?? "locked"} $align="right" $bold={r.bold}>{r.self}</Cell>
                      <Cell $kind="locked" $align="right" $bold={r.bold}>{r.wife}</Cell>
                    </>
                  ) : (
                    <Cell $kind="gap" colSpan={4} />
                  )}
                </Row>
              ))}
            </tbody>
          </Grid>
        </SheetArea>
        <Note><strong>Numeric:</strong><p>Enter numeric value .</p></Note>
        <Callout>Fill in your<br />personal relief</Callout>
        <Marks width="470" height="84" viewBox="0 0 470 84" fill="none">
          <ellipse cx="133" cy="42" rx="126" ry="35" stroke="#24b14c" strokeWidth="5" />
          <path d="M269 44l47-6 48-3 2-2h4v4h94v13h-94v4h-5l-49-4-47-3z" fill="#24b14c" stroke="#24b14c" strokeLinejoin="round" />
        </Marks>
        <VScroll>
          <Splitter />
          <ScrollButton aria-label="Scroll up"><Arrow d="M0 8h10L5 3z" /></ScrollButton>
          <VThumb><svg width="7" height="7" viewBox="0 0 7 7"><path d="M0 .5h7M0 3.500h7M0 6.500h7" stroke="#999" /></svg></VThumb>
          <Spacer />
          <ScrollButton aria-label="Scroll down"><Arrow d="M0 3h10L5 8z" /></ScrollButton>
        </VScroll>
      </Workspace>

      <SheetBar>
        <SheetNav>
          <NavButton aria-label="First sheet"><Arrow d="M1 1h1.500v8H1zM8 1v8L3.500 5z" /></NavButton>
          <NavButton aria-label="Previous sheet"><Arrow d="M7 1v8L2.500 5z" /></NavButton>
          <NavButton aria-label="Next sheet"><Arrow d="M3 1v8l4.500-4z" /></NavButton>
          <NavButton aria-label="Last sheet"><Arrow d="M2 1v8l4.500-4zM7.500 1H9v8H7.500z" /></NavButton>
        </SheetNav>
        <SheetTab $w={60} $kind="error">Errors</SheetTab>
        {sheetTabs.map((t, i) => (
          <React.Fragment key={t.name}>
            <SheetTab $w={t.w}>{t.name}</SheetTab>
            {i < sheetTabs.length - 1 && <Slash />}
          </React.Fragment>
        ))}
        <SheetTab $w={142} $kind="active">T_Tax_Computation</SheetTab>
        <NavButton aria-label="Insert worksheet"><NewSheetIcon /></NavButton>
        <Slash />
        <HScroll>
          <HGrip />
          <NavButton aria-label="Scroll left"><Arrow d="M7 1v8L2.500 5z" /></NavButton>
          <HThumb><svg width="7" height="7" viewBox="0 0 7 7"><path d="M.5 0v7M3.500 0v7M6.500 0v7" stroke="#999" /></svg></HThumb>
          <NavButton aria-label="Scroll right"><Arrow d="M3 1v8l4.500-4z" /></NavButton>
          <HGrip />
        </HScroll>
      </SheetBar>

      <StatusBar>
        <Ready>Ready</Ready>
        <StatusRight>
          <ViewButton $on aria-label="Normal view"><ViewIcon kind={0} /></ViewButton>
          <ViewButton aria-label="Page layout view"><ViewIcon kind={1} /></ViewButton>
          <ViewButton aria-label="Page break preview"><ViewIcon kind={2} /></ViewButton>
          <ZoomLabel>100%</ZoomLabel>
          <button aria-label="Zoom out"><ZoomDisc /></button>
          <ZoomRange type="range" min="0" max="100" defaultValue="50" aria-label="Zoom" />
          <button aria-label="Zoom in"><ZoomDisc plus /></button>
        </StatusRight>
      </StatusBar>
      <DesktopEdge />
      <Watermark>
        <p>Activate Windows</p>
        <p>Go to Settings to activate Windows.</p>
      </Watermark>
    </Window>
  );
}
